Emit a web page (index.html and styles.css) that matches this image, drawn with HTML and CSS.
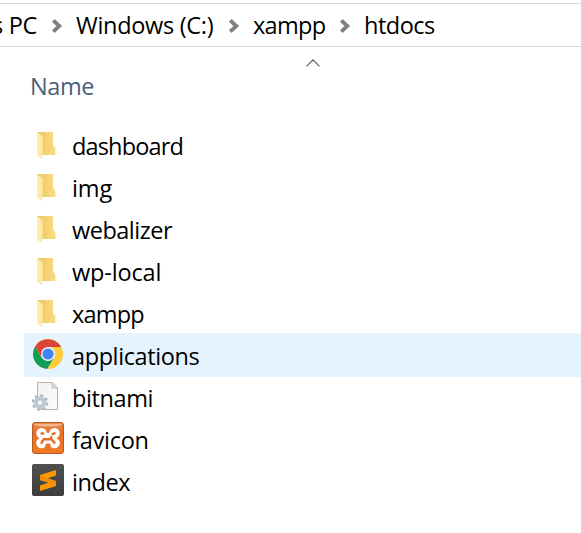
FILE: index.html
```
<!DOCTYPE html>
<html lang="en">
<head>
<meta charset="utf-8">
<title>htdocs</title>
<link rel="stylesheet" href="styles.css">
</head>
<body>
<svg class="defs" width="0" height="0" aria-hidden="true">
  <defs>
    <linearGradient id="back" x1="0" x2="1"><stop offset="0" stop-color="#ebc662"/><stop offset="1" stop-color="#fadc80"/></linearGradient>
    <linearGradient id="front" x1="0" x2="1"><stop offset="0" stop-color="#ffeeb4"/><stop offset="1" stop-color="#ffe49a"/></linearGradient>
    <linearGradient id="orange" x2="0" y2="1"><stop offset="0" stop-color="#e99058"/><stop offset=".35" stop-color="#e86b20"/><stop offset="1" stop-color="#f37b25"/></linearGradient>
    <linearGradient id="dark" x2="0" y2="1"><stop offset="0" stop-color="#505050"/><stop offset="1" stop-color="#3d3d3d"/></linearGradient>
    <linearGradient id="page" x2="1" y2="1"><stop offset="0" stop-color="#f2f2f2"/><stop offset="1" stop-color="#fafafa"/></linearGradient>
    <symbol id="chevron" viewBox="0 0 12 16"><path d="M2.300 2.300 8.300 8l-6 5.700" fill="none" stroke="#808080" stroke-width="3.900"/></symbol>
    <symbol id="folder" viewBox="0 0 32 32">
      <path d="M5 4h16v13.500l1.300.8v1.500l1.100.8V27H5z" fill="url(#back)"/>
      <path d="M5 4l5.800 4.500v18l-.8.6v4l-5-3.400z" fill="url(#front)"/>
    </symbol>
  </defs>
</svg>
<nav class="path">
  <span class="clip"><span>s PC</span></span>
  <svg class="chev"><use href="#chevron"/></svg>
  <span class="crumb windows">Windows (C:)</span>
  <svg class="chev"><use href="#chevron"/></svg>
  <span class="crumb xampp">xampp</span>
  <svg class="chev"><use href="#chevron"/></svg>
  <span class="crumb htdocs">htdocs</span>
</nav>
<header class="head">
  <svg class="sort" viewBox="0 0 14 8"><path d="M.5 7.300 7 .8l6.500 6.500" fill="none" stroke="#555" stroke-width="1.100"/></svg>
  <span class="name">Name</span>
</header>
<main class="list">
  <div class="row"><svg class="icon"><use href="#folder"/></svg><span class="dashboard">dashboard</span></div>
  <div class="row"><svg class="icon"><use href="#folder"/></svg><span class="img">img</span></div>
  <div class="row"><svg class="icon"><use href="#folder"/></svg><span class="webalizer">webalizer</span></div>
  <div class="row"><svg class="icon"><use href="#folder"/></svg><span class="wp">wp-local</span></div>
  <div class="row"><svg class="icon"><use href="#folder"/></svg><span class="xampp">xampp</span></div>
  <div class="row active">
    <svg class="icon" viewBox="0 0 32 32">
      <circle cx="16" cy="16" r="15" fill="#ffcd40"/>
      <path d="M3.010 8.500A15 15 0 0 1 29 8.900H16L9.800 19.500z" fill="#db4437"/>
      <path d="M3.010 8.500A15 15 0 0 0 15.400 31L22 19.700 16 23 9.600 19.800z" fill="#0f9d58"/>
      <path d="M29 8.900A15 15 0 0 1 15.400 31L22.200 19.500 22 9z" fill="#ffcd40"/>
      <circle cx="16" cy="16" r="7" fill="#f3f5fb"/><circle cx="16" cy="16" r="5.600" fill="#4285f4"/>
    </svg><span class="applications">applications</span></div>
  <div class="row">
    <svg class="icon" viewBox="0 0 32 32">
      <path d="M5.500 2.500H20l5.500 5.500v21.500h-20z" fill="url(#page)" stroke="#b4b4b4"/>
      <path d="M20 2.500V8h5.500z" fill="#e1e1e1" stroke="#b4b4b4" stroke-width=".8"/>
      <circle cx="8" cy="22.600" r="6.900" fill="none" stroke="#aebac2" stroke-width="2.800" stroke-dasharray="3 2.419"/>
      <circle cx="8" cy="22.600" r="4.600" fill="none" stroke="#becad2" stroke-width="3.600"/>
      <circle cx="8" cy="22.600" r="2.900" fill="#f2f4f5" stroke="#94a2ac" stroke-width=".6"/>
    </svg><span class="bitnami">bitnami</span></div>
  <div class="row">
    <svg class="icon" viewBox="0 0 32 32">
      <rect x=".5" y=".5" width="31" height="31" rx="2.500" fill="url(#orange)" stroke="#b65b28"/>
      <path d="M3 2h26v1.500Q16 5.500 3 3.500z" fill="#f4b48d"/>
      <g fill="#fff">
        <circle cx="9.500" cy="11.300" r="5.300"/><circle cx="22.500" cy="11.300" r="5.300"/>
        <circle cx="9.500" cy="21" r="5.300"/><circle cx="22.500" cy="21" r="5.300"/>
        <path d="M8 10.800h16v10.700H8z"/>
      </g>
      <path d="M13.500 22h5v5h-5z" fill="#ee7223"/>
      <g fill="none" stroke="#e96d22" stroke-width="2.400" stroke-linecap="round">
        <path d="M9.500 11.500h1.600M9.500 20.800l2.300-3.600h7.500l3.200 3.600M19.300 17.200v-2M20.500 12.200l2-.9"/>
      </g>
    </svg><span class="favicon">favicon</span></div>
  <div class="row">
    <svg class="icon" viewBox="0 0 32 32">
      <rect width="32" height="32" rx="2" fill="url(#dark)"/>
      <path d="M8 11.100 24 6v5.500l-8.500 2.800L24 17v4.900L8 27v-5.400l8.500-2.800L8 16z" fill="#ff9800"/>
      <path d="m8 16 8.500 2.800L24 21.900V17l-8.500-2.700L8 11.200z" fill="#f28e06"/>
    </svg><span class="index">index</span></div>
</main>
</body>
</html>
```

FILE: styles.css
```
* { box-sizing: border-box; }
body {
  margin: 0;
  padding-top: 3px;
  height: 533px;
  overflow: hidden;
  background: #fff;
  color: #000;
  font: 23.500px/42px "Open Sans", "Noto Sans", sans-serif;
  letter-spacing: -0.4px;
  white-space: nowrap;
}
.defs { position: absolute; }
.path {
  display: flex;
  align-items: center;
  height: 44px;
  border: solid #d9d9d9;
  border-width: 1px 0;
  letter-spacing: -0.3px;
}
.path > span { flex: none; line-height: 44px; }
.clip { display: flex; justify-content: flex-end; width: 37px; overflow: hidden; }
.chev { flex: none; width: 12px; height: 16px; margin: 1px 13px 0 14px; }
.path .windows { width: 138px; }
.path .xampp { width: 72px; letter-spacing: -0.7px; }
.path .htdocs { letter-spacing: -0.5px; }
.head { height: 77px; padding-left: 30px; color: #4c607a; }
.sort { display: block; width: 14px; height: 8px; margin-left: 276px; transform: translateY(12px); }
.name { display: block; margin-top: 10px; }
.row {
  display: flex;
  align-items: center;
  height: 42px;
  margin-left: 24px;
  padding-left: 8px;
}
.row span { padding-top: 1px; }
.dashboard { letter-spacing: -0.85px; }
.img { letter-spacing: -0.1px; }
.webalizer { letter-spacing: -0.5px; }
.wp { letter-spacing: -0.15px; }
.row .xampp { letter-spacing: -0.8px; }
.favicon { letter-spacing: -0.25px; }
.active { box-shadow: 0 -1px #e5f3ff, 0 1px #e5f3ff; background: #e5f3ff; }
.icon { flex: none; width: 32px; height: 32px; margin: -2px 8px 0 0; }
```
